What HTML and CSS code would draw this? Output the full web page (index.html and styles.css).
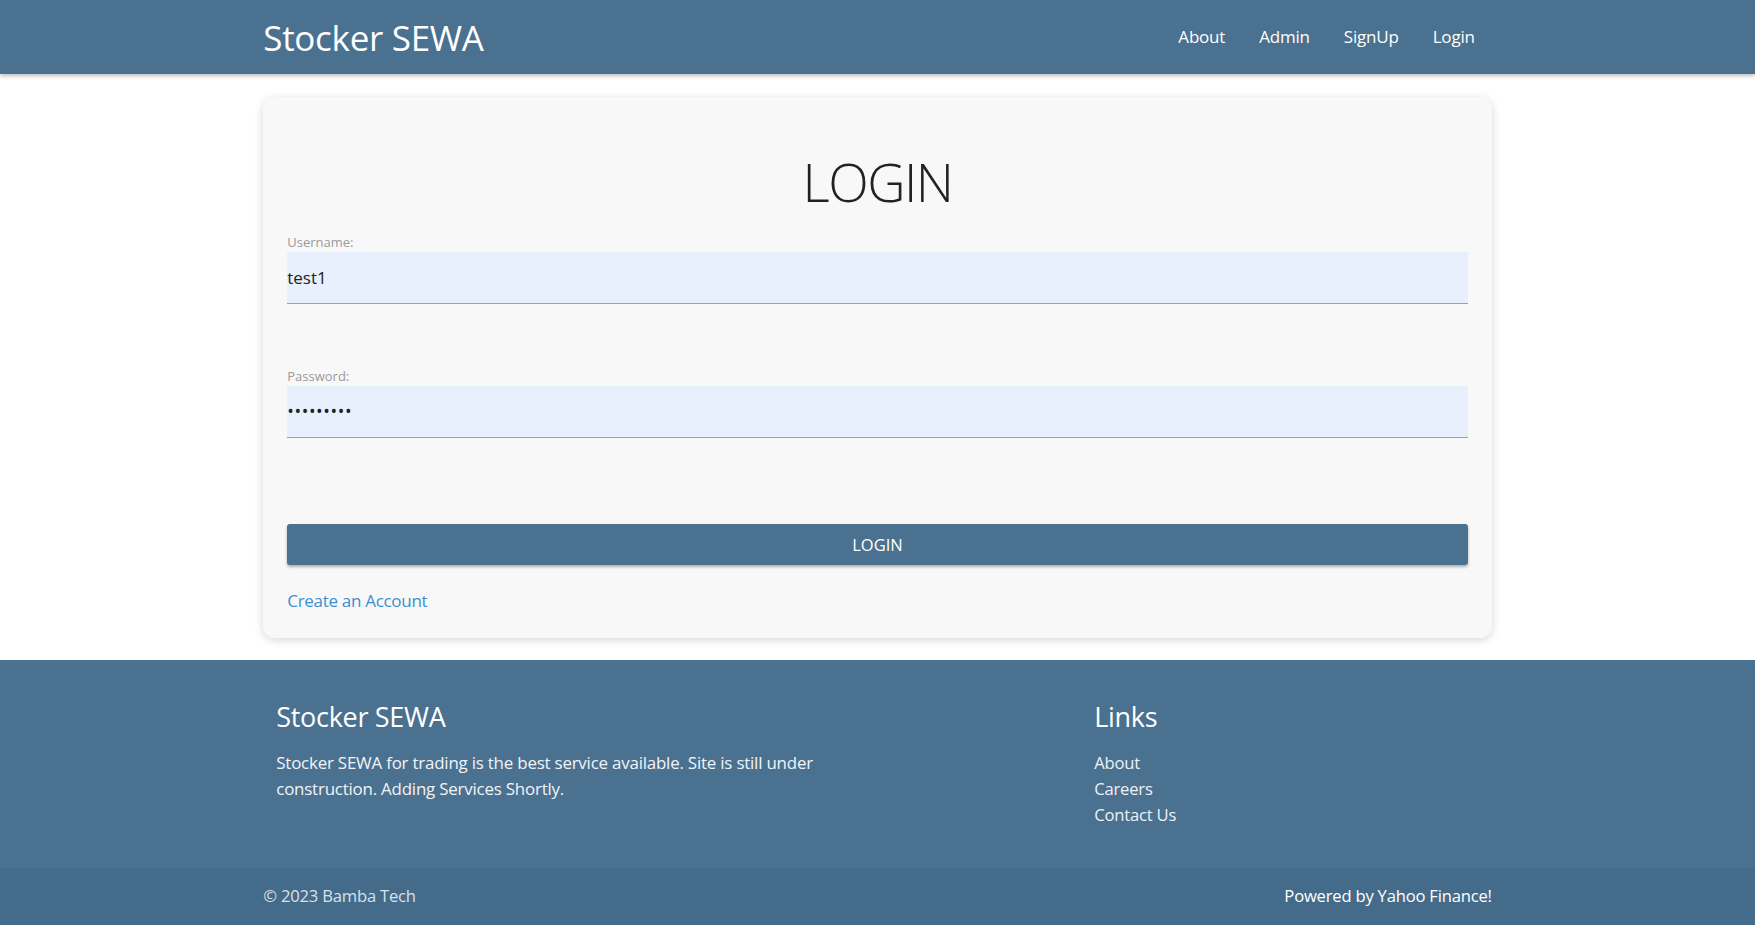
FILE: index.html
```html
<!DOCTYPE html>
<html lang="en">
<head>
<meta charset="utf-8">
<title>Stocker SEWA - Login</title>
<link rel="stylesheet" href="styles.css">
</head>
<body>
<header class="topbar">
  <div class="wrap topbar-inner">
    <a class="brand" href="#">Stocker SEWA</a>
    <nav class="nav">
      <a href="#">About</a>
      <a href="#">Admin</a>
      <a href="#">SignUp</a>
      <a href="#">Login</a>
    </nav>
  </div>
</header>

<main class="wrap main">
  <section class="card">
    <h1 class="card-title">LOGIN</h1>
    <form class="form">
      <div class="field">
        <label for="username">Username:</label>
        <input id="username" type="text" value="test1">
      </div>
      <div class="field field-pw">
        <label for="password">Password:</label>
        <input id="password" type="password" value="123456789">
      </div>
      <button type="button" class="btn">LOGIN</button>
    </form>
    <a class="create" href="#">Create an Account</a>
  </section>
</main>

<footer class="footer">
  <div class="wrap footer-grid">
    <div class="footer-about">
      <h3>Stocker SEWA</h3>
      <p>Stocker SEWA for trading is the best service available. Site is still under construction. Adding Services Shortly.</p>
    </div>
    <div class="footer-links">
      <h3>Links</h3>
      <ul>
        <li><a href="#">About</a></li>
        <li><a href="#">Careers</a></li>
        <li><a href="#">Contact Us</a></li>
      </ul>
    </div>
  </div>
  <div class="copy">
    <div class="wrap copy-inner">
      <span class="copy-left">© 2023 Bamba Tech</span>
      <span class="copy-right">Powered by Yahoo Finance!</span>
    </div>
  </div>
</footer>
</body>
</html>
```

FILE: styles.css
```css
* { box-sizing: border-box; }

html, body {
  margin: 0;
  padding: 0;
}

body {
  font-family: "Segoe UI", "Open Sans", "Noto Sans", sans-serif;
  font-size: 17.6px;
  line-height: 1.5;
  color: #222;
  background: #fff;
}

a { text-decoration: none; }

.wrap {
  width: 70%;
  margin: 0 auto;
}

/* Header */
.topbar {
  background: #4a7190;
  height: 74px;
  box-shadow: 0 2px 4px rgba(0, 0, 0, 0.25);
  position: relative;
  z-index: 2;
}

.topbar-inner {
  height: 100%;
  display: flex;
  align-items: center;
  justify-content: space-between;
}

.brand {
  color: #fff;
  font-size: 35px;
  line-height: 1;
  letter-spacing: -0.3px;
  margin-top: 1px;
}

.nav {
  display: flex;
  align-items: center;
}

.nav a {
  color: #fff;
  font-size: 17px;
  padding: 0 17px;
  letter-spacing: -0.2px;
}

/* Card */
.main {
  padding: 23px 0 22px;
}

.card {
  background: #f8f8f8;
  border-radius: 12px;
  box-shadow: 0 2px 10px rgba(0, 0, 0, 0.16);
  padding: 24px 24px 24px;
}

.card-title {
  margin: 29px 0 19px;
  text-align: center;
  font-size: 53px;
  font-weight: 300;
  line-height: 1.2;
  color: #222;
  letter-spacing: -1.5px;
}

.form {
  display: flex;
  flex-direction: column;
}

.field {
  display: flex;
  flex-direction: column;
}

.field label {
  font-size: 13px;
  line-height: 19px;
  color: #9a9a9a;
}

.field input {
  height: 52px;
  border: none;
  border-bottom: 1px solid #9aa1a9;
  background: #e8f0fe;
  padding: 0;
  margin: 0;
  font-family: inherit;
  font-size: 17px;
  color: #222;
  outline: none;
}

.field-pw {
  margin-top: 63px;
}

.field-pw input {
  font-size: 17.6px;
  letter-spacing: 0.6px;
}

.btn {
  margin-top: 86px;
  height: 41px;
  border: none;
  border-radius: 3px;
  background: #4a7190;
  color: #fff;
  font-family: inherit;
  font-size: 16.5px;
  box-shadow: 0 2px 3px rgba(0, 0, 0, 0.3);
  cursor: pointer;
}

.create {
  display: inline-block;
  margin-top: 23px;
  color: #3d8fce;
  font-size: 17px;
  line-height: 26px;
  letter-spacing: -0.3px;
}

/* Footer */
.footer {
  background: #4a7190;
  color: #fff;
}

.footer-grid {
  display: grid;
  grid-template-columns: repeat(12, 1fr);
  padding: 41px 0 40px;
}

.footer-about {
  grid-column: 1 / span 6;
  padding: 0 13px;
}

.footer-links {
  grid-column: 9 / span 4;
  padding: 0 12px;
}

.footer h3 {
  margin: 0 0 17px;
  font-size: 27px;
  font-weight: 400;
  line-height: 1.2;
  letter-spacing: -0.3px;
}

.footer p {
  margin: 0;
  font-size: 16.9px;
  line-height: 26px;
  letter-spacing: -0.2px;
  color: #f2f4f7;
}

.footer ul {
  list-style: none;
  margin: 0;
  padding: 0;
}

.footer li {
  font-size: 16.6px;
  line-height: 26px;
  letter-spacing: -0.2px;
}

.footer li a {
  color: #eef1f5;
}

.copy {
  background: #456b8b;
}

.copy-inner {
  display: flex;
  justify-content: space-between;
  align-items: center;
  height: 57px;
  font-size: 16.6px;
  letter-spacing: -0.2px;
}

.copy-left {
  color: #d9e0e8;
}

.copy-right {
  color: #fff;
}
```
